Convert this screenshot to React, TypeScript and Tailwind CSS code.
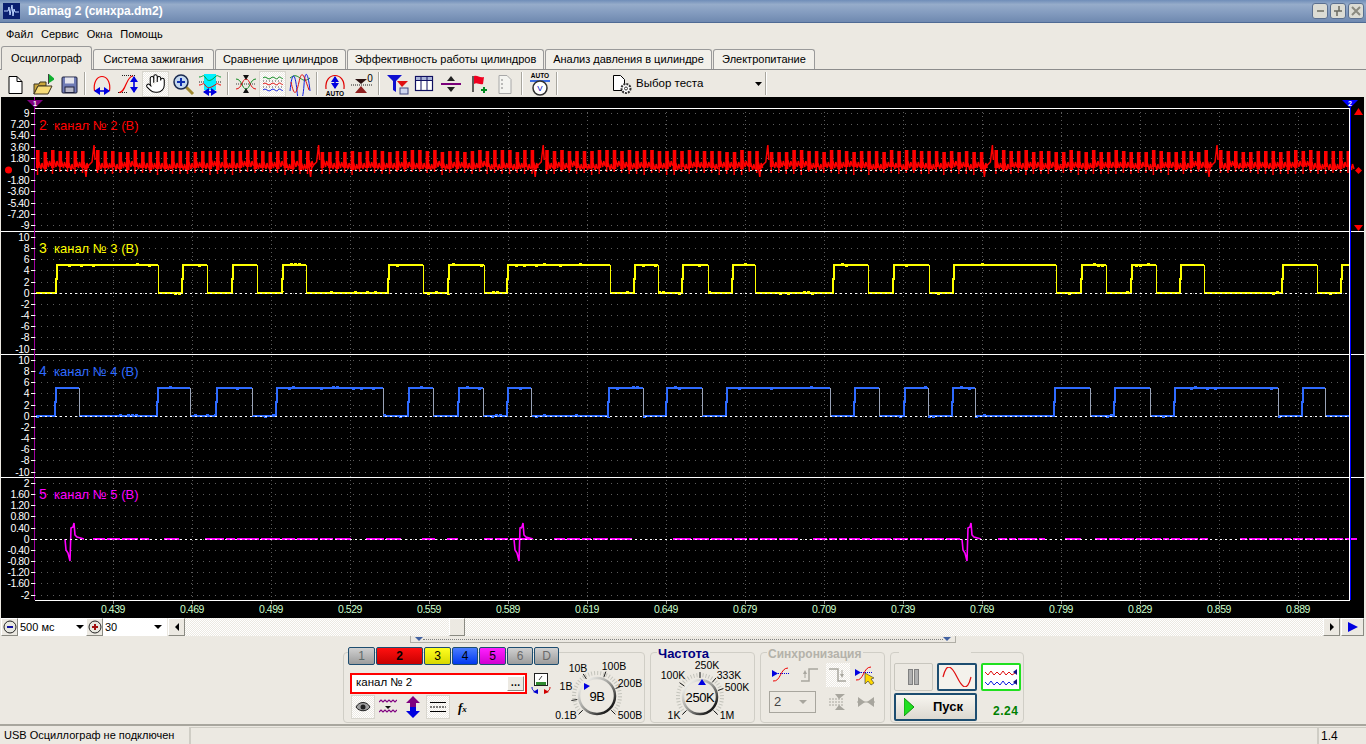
import type { ReactNode } from "react";
import { Hand } from "lucide-react";

const ditherBg =
  "bg-[repeating-conic-gradient(#ffffff_0_25%,#ece9e2_0_50%)] bg-[length:2px_2px]";

const noise = (i: number) => {
  const s = Math.sin(i * 12.9898) * 43758.5453;
  return s - Math.floor(s);
};

const PLOT_L = 35;
const PLOT_R = 1350;

function redPaths() {
  let bars = "";
  let links = "";
  let x = PLOT_L + 1;
  let i = 0;
  let nextEvent = 86;
  while (x < PLOT_R - 2) {
    if (x >= nextEvent - 3) {
      const e = nextEvent;
      links += `M${e - 2} 163 L${e} 177 L${e + 1} 168 L${e + 3} 165 L${e + 6} 162 L${e + 8} 145 L${e + 9} 160 `;
      x = e + 10;
      nextEvent += 224.6;
      continue;
    }
    const top = 150 + Math.round(noise(i) * 2);
    const bot = 167 + Math.round(noise(i + 0.5) * 3);
    const tail = 172 + Math.round(noise(i + 0.9) * 3);
    const mid = 160 + Math.round(noise(i + 0.3) * 3);
    bars += `M${x} ${top} h3.6 V${bot} h-3.6 Z `;
    links += `M${x + 1.5} ${bot} V${tail} M${x + 3} ${mid} L${x + 5} ${mid + 7} L${x + 6} ${mid + 1} L${x + 7.5} ${mid + 6} `;
    x += 7.5;
    i++;
  }
  return { bars, links };
}

function squarePaths(edges: number[][], hi: number, lo: number, seed: number) {
  const speck = (x: number, y: number, n: number) => {
    const v = noise(n + seed);
    if (v < 0.1) return `M${x} ${y - 1.5} h3 `;
    if (v > 0.9) return `M${x} ${y + 1.5} h3 `;
    return "";
  };
  let thick = `M${PLOT_L + 1} ${lo}`;
  let thin = "";
  let specks = "";
  let prev = PLOT_L + 1;
  let n = 0;
  for (const [rise, fall] of edges) {
    for (let x = prev; x < rise - 1; x += 4) specks += speck(x, lo, n++);
    const mid = Math.round((hi + lo) / 2);
    thick += ` L${rise - 1} ${lo} L${rise - 1} ${mid} L${rise} ${mid} L${rise} ${hi}`;
    for (let x = rise + 3; x < fall - 3; x += 4) specks += speck(x, hi, n++);
    thick += ` L${fall} ${hi}`;
    if (fall < PLOT_R) {
      thin += `M${fall} ${hi} L${fall} ${lo} `;
      thick += ` M${fall} ${lo}`;
    }
    prev = fall;
  }
  if (prev < PLOT_R) {
    thick += ` L${PLOT_R} ${lo}`;
    for (let x = prev; x < PLOT_R - 3; x += 4) specks += speck(x, lo, n++);
  }
  return { thick, thin, specks };
}

const yellowEdges = [
  [57, 158], [183, 207], [233, 257], [283, 306], [389, 423], [449, 484], [508, 610], [635, 658], [683, 708],
  [733, 755], [834, 868], [894, 929], [954, 1056], [1082, 1106], [1132, 1156], [1181, 1204], [1283, 1317], [1342, 1350],
];
const blueEdges = [
  [56, 79], [158, 190], [217, 252], [277, 383], [409, 433], [459, 483], [508, 531], [609, 643], [667, 702],
  [727, 830], [855, 879], [905, 928], [953, 975], [1055, 1090], [1115, 1150], [1175, 1278], [1303, 1325],
];

function magentaPaths() {
  const spikes = [70, 519, 967];
  let spike = "";
  for (const s of spikes) {
    spike += `M${s - 5} 539 L${s - 4} 550 L${s - 2} 553 L${s} 561 L${s + 1} 528 L${s + 3} 527 L${s + 4} 523 L${s + 5} 535 L${s + 7} 537 L${s + 14} 539 `;
  }
  let base = "";
  let x = PLOT_L + 1;
  let i = 0;
  while (x < PLOT_R) {
    const len = 6 + Math.round(noise(i) * 16);
    const near = spikes.some((s) => x > s - 8 && x < s + 22);
    if (!near && noise(i + 0.7) > 0.2) base += `M${x} 539 L${x + len} 539 `;
    x += len + 2;
    i++;
  }
  return { spike, base };
}

type PanelDef = { labels: string[]; top: number; step: number; zero: number };

const panels: PanelDef[] = [
  { labels: ["9", "7.20", "5.40", "3.60", "1.80", "0", "-1.80", "-3.60", "-5.40", "-7.20", "-9"], top: 113, step: 11.2, zero: 170 },
  { labels: ["10", "8", "6", "4", "2", "0", "-2", "-4", "-6", "-8", "-10"], top: 237, step: 11.15, zero: 293 },
  { labels: ["10", "8", "6", "4", "2", "0", "-2", "-4", "-6", "-8", "-10"], top: 360, step: 11.15, zero: 416 },
  { labels: ["2", "1.60", "1.20", "0.80", "0.40", "0", "-0.40", "-0.80", "-1.20", "-1.60", "-2"], top: 483, step: 11.15, zero: 539 },
];

const xLabels = ["0.439", "0.469", "0.499", "0.529", "0.559", "0.589", "0.619", "0.649", "0.679", "0.709", "0.739", "0.769", "0.799", "0.829", "0.859", "0.889"];

const titles = [
  { n: "2", text: "канал № 2 (В)", y: 130, color: "#ff0000" },
  { n: "3", text: "канал № 3 (В)", y: 253, color: "#ffff00" },
  { n: "4", text: "канал № 4 (В)", y: 376, color: "#2f6bff" },
  { n: "5", text: "канал № 5 (В)", y: 499, color: "#ff00ff" },
];

function Scope() {
  const yellow = squarePaths(yellowEdges, 265, 293, 3);
  const blue = squarePaths(blueEdges, 388, 416, 41);
  const red = redPaths();
  const magenta = magentaPaths();
  return (
    <svg className="block h-[521px] w-[1366px] shrink-0" viewBox="0 97 1366 521">
      <rect x="0" y="97" width="1366" height="521" fill="#ece9e2" />
      <rect x="1" y="97" width="1363" height="521" fill="#000000" />
      {panels.map((p) =>
        p.labels.map((_, i) => (
          <line key={`${p.top}-${i}`} x1={PLOT_L} x2={PLOT_R} y1={Math.round(p.top + i * p.step)} y2={Math.round(p.top + i * p.step)} stroke="#5c5c5c" strokeDasharray="1 5" shapeRendering="crispEdges" />
        ))
      )}
      {xLabels.map((l, i) => (
        <g key={l}>
          <line x1={113.5 + i * 79} x2={113.5 + i * 79} y1="108" y2="600" stroke="#5c5c5c" strokeDasharray="1 3" shapeRendering="crispEdges" />
          <line x1={113.5 + i * 79} x2={113.5 + i * 79} y1="600" y2="604" stroke="#8a8a8a" shapeRendering="crispEdges" />
          <text x={113 + i * 79} y="613" textAnchor="middle" fontSize="10.5" letterSpacing="-0.5" fill="#ccffcc">{l}</text>
        </g>
      ))}

      <path d={red.bars} fill="#ff0000" />
      <path d={red.links} stroke="#ff0000" strokeWidth="1.5" fill="none" />
      <path d={yellow.thick} stroke="#ffff00" strokeWidth="2" fill="none" shapeRendering="crispEdges" />
      <path d={yellow.thin} stroke="#ffff00" strokeWidth="1" fill="none" shapeRendering="crispEdges" />
      <path d={yellow.specks} stroke="#ffff00" strokeWidth="1" fill="none" shapeRendering="crispEdges" />
      <path d={blue.thick} stroke="#2f6bff" strokeWidth="2" fill="none" shapeRendering="crispEdges" />
      <path d={blue.thin} stroke="#9aa4b8" strokeWidth="1" fill="none" shapeRendering="crispEdges" />
      <path d={blue.specks} stroke="#2f6bff" strokeWidth="1" fill="none" shapeRendering="crispEdges" />
      <path d={magenta.base} stroke="#ff00ff" strokeWidth="2" fill="none" shapeRendering="crispEdges" />
      <path d={magenta.spike} stroke="#ff00ff" strokeWidth="1.6" fill="none" />

      {panels.map((p) => (
        <line key={p.zero} x1={PLOT_L} x2={PLOT_R} y1={p.zero + 0.5} y2={p.zero + 0.5} stroke="#ffffff" strokeDasharray="2 3" shapeRendering="crispEdges" />
      ))}

      <line x1={PLOT_L} x2={PLOT_R} y1="108.5" y2="108.5" stroke="#ffffff" shapeRendering="crispEdges" />
      <line x1="1" x2="1364" y1="231.5" y2="231.5" stroke="#ffffff" shapeRendering="crispEdges" />
      <line x1="1" x2="1364" y1="354.5" y2="354.5" stroke="#ffffff" shapeRendering="crispEdges" />
      <line x1="1" x2="1364" y1="477.5" y2="477.5" stroke="#ffffff" shapeRendering="crispEdges" />
      <line x1={PLOT_L} x2={PLOT_R} y1="600.5" y2="600.5" stroke="#ffffff" shapeRendering="crispEdges" />
      <line x1="34.5" x2="34.5" y1="97" y2="600" stroke="#a000a0" shapeRendering="crispEdges" />
      <line x1="1349.5" x2="1349.5" y1="108" y2="600" stroke="#ffffff" shapeRendering="crispEdges" />
      <line x1="1350.5" x2="1350.5" y1="100" y2="600" stroke="#0000ff" shapeRendering="crispEdges" />

      {panels.map((p) =>
        p.labels.map((l, i) => {
          const y = Math.round(p.top + i * p.step);
          return (
            <g key={`${p.top}-l-${i}`}>
              <text x="29" y={y + 4} textAnchor="end" fontSize="10.5" letterSpacing="-0.5" fill="#ffffff">{l}</text>
              <line x1="31" x2="35" y1={y + 0.5} y2={y + 0.5} stroke="#ffffff" shapeRendering="crispEdges" />
            </g>
          );
        })
      )}

      {titles.map((t) => (
        <g key={t.n} fill={t.color} fontSize="13">
          <text x="39" y={t.y} fontSize="14">{t.n}</text>
          <text x="54" y={t.y}>{t.text}</text>
        </g>
      ))}

      <polygon points="27,100 43,100 35,108" fill="#800080" />
      <text x="35" y="105.5" textAnchor="middle" fontSize="7" fontWeight="700" fill="#ffffff">1</text>
      <polygon points="1342,100 1358,100 1350,108" fill="#0000ff" />
      <text x="1350" y="106" textAnchor="middle" fontSize="7" fontWeight="700" fill="#ffffff">2</text>

      <circle cx="8.5" cy="170" r="3.5" fill="#ff0000" />
      <polygon points="1358.5,108 1354,115 1363,115" fill="#ff0000" />
      <polygon points="1358.5,167 1362,170.5 1358.5,174 1355,170.5" fill="#ff0000" />
      <polygon points="1354,225 1363,225 1358.5,231" fill="#ff0000" />
    </svg>
  );
}

const Svg = ({ children, w = 24, h = 24 }: { children: ReactNode; w?: number; h?: number }) => (
  <svg width={w} height={h} viewBox={`0 0 ${w} ${h}`} fill="none" className="block">
    {children}
  </svg>
);

const VArrow = ({ x, y1, y2 }: { x: number; y1: number; y2: number }) => (
  <g>
    <line x1={x} x2={x} y1={y1} y2={y2} stroke="#0000e0" strokeWidth="1.6" />
    <polygon points={`${x},${y1 - 1} ${x - 4},${y1 + 5} ${x + 4},${y1 + 5}`} fill="#0000e0" />
    <polygon points={`${x},${y2 + 1} ${x - 4},${y2 - 5} ${x + 4},${y2 - 5}`} fill="#0000e0" />
  </g>
);

const HArrow = ({ y, x1, x2 }: { y: number; x1: number; x2: number }) => (
  <g>
    <line x1={x1} x2={x2} y1={y} y2={y} stroke="#0000e0" strokeWidth="1.6" />
    <polygon points={`${x1 - 1},${y} ${x1 + 5},${y - 4} ${x1 + 5},${y + 4}`} fill="#0000e0" />
    <polygon points={`${x2 + 1},${y} ${x2 - 5},${y - 4} ${x2 - 5},${y + 4}`} fill="#0000e0" />
  </g>
);

const toolbarIcons: Record<string, ReactNode> = {
  file: (
    <Svg>
      <path d="M6 4.5h8l5 5v12H6z" fill="#ffffff" stroke="#000000" />
      <path d="M14 4.5v5h5" stroke="#000000" />
    </Svg>
  ),
  open: (
    <Svg>
      <path d="M18.5 2v10" stroke="#404040" />
      <polygon points="19,2 25,7 19,11" fill="#10b030" />
      <path d="M4 12h5l1 -2h6v4H8l-4 8z" fill="#c9a53a" stroke="#3d3520" />
      <path d="M4 22l4 -8h14l-4 8z" fill="#f7dc78" stroke="#3d3520" />
    </Svg>
  ),
  save: (
    <Svg>
      <rect x="5" y="5" width="15" height="16" rx="1" fill="#6f7bb5" stroke="#20233f" />
      <rect x="8" y="5.5" width="9" height="6" fill="#e4e4ec" />
      <rect x="8" y="15" width="9" height="5.5" fill="#b8b8c8" stroke="#20233f" />
    </Svg>
  ),
  arcWidth: (
    <Svg>
      <path d="M4.5 19C3 9 8 4.5 12 4.5S21 9 19.5 19" stroke="#f00000" strokeWidth="1.2" />
      <HArrow y={19} x1={5} x2={19} />
    </Svg>
  ),
  arcAmp: (
    <Svg>
      <path d="M5 3.5h14M1 20.5h10" stroke="#202020" strokeDasharray="1 1" />
      <path d="M2 20.5C9 21 9 4 16 4" stroke="#f00000" strokeWidth="1.2" />
      <VArrow x={17} y1={5} y2={20} />
    </Svg>
  ),
  hand: <Hand size={21} strokeWidth={1.2} color="#000000" fill="#ffffff" />,
  zoom: (
    <Svg>
      <line x1="15" y1="15" x2="22" y2="22" stroke="#a08a30" strokeWidth="3" />
      <circle cx="10" cy="10" r="7" fill="#c4d8ee" stroke="#1a2a50" strokeWidth="1.5" />
      <path d="M6 10h8M10 6v8" stroke="#1030b0" strokeWidth="2" />
    </Svg>
  ),
  cursor: (
    <Svg>
      <rect x="6" y="2" width="12" height="16" fill="#00f0ff" />
      <path d="M1 5c4 0 4 -3 6 0s4 6 10 0c3-3 3 0 6 0" stroke="#0a9a30" strokeWidth="1" />
      <path d="M1 10h5 M18 10h5" stroke="#202020" strokeDasharray="1 1" />
      <path d="M1 13c4 0 4 -3 6 0s4 4 10 0c3-3 3 0 6 0" stroke="#f00000" strokeWidth="1" />
      <HArrow y={20} x1={6} x2={18} />
    </Svg>
  ),
  cross: (
    <Svg>
      <path d="M2 7c6 0 6 10 10 10s4-10 10-10" stroke="#108a20" />
      <path d="M2 17c6 0 6 -10 10 -10s4 10 10 10" stroke="#e01010" />
      <path d="M2 12h20" stroke="#404040" strokeDasharray="1 1" />
      <polygon points="12,8 9,3 15,3" fill="#111111" />
      <polygon points="12,16 9,21 15,21" fill="#111111" />
    </Svg>
  ),
  waves: (
    <Svg>
      <path d="M2 6c3-3 5 3 8 0s5 3 7 0 4 2 5 0" stroke="#108a20" />
      <path d="M2 12c3-3 5 3 8 0s5 3 7 0 4 2 5 0" stroke="#e01010" />
      <path d="M2 18c3-3 5 3 8 0s5 3 7 0 4 2 5 0" stroke="#1020e0" />
      <path d="M2 9h20M2 15h20" stroke="#505050" strokeDasharray="1 2" />
    </Svg>
  ),
  overlap: (
    <Svg>
      <path d="M2 6c4-3 6-3 10 0s6 3 10 0" stroke="#108a20" />
      <path d="M2 19c2-20 5-20 7 0s6 10 7-6 4-14 6 6" stroke="#1020e0" />
      <path d="M3 10c3 14 5 14 8 0s5-6 10 8" stroke="#e01010" />
    </Svg>
  ),
  auto: (
    <Svg>
      <path d="M3 17C2 8 7 3.5 12 3.5S22 8 21 17" stroke="#e00000" strokeWidth="1.2" />
      <VArrow x={12} y1={5} y2={16} />
      <text x="12" y="23.5" textAnchor="middle" fontSize="6.5" fontWeight="700" fill="#000000">AUTO</text>
    </Svg>
  ),
  zero: (
    <Svg>
      <polygon points="11,12 5,7 17,7" fill="#2a1010" />
      <path d="M1 13h22" stroke="#202020" strokeDasharray="1 1" />
      <polygon points="11,14 5,21 17,21" fill="#902020" />
      <text x="20" y="10" textAnchor="middle" fontSize="10" fill="#000000">0</text>
    </Svg>
  ),
  filter: (
    <Svg>
      <polygon points="2,3 17,3 11,9 11,20 8,18 8,9" fill="#1010d0" />
      <polygon points="12,9 23,9 17,15" fill="#e01010" />
      <rect x="15" y="16" width="8" height="6" fill="#d0d8f0" stroke="#404880" />
    </Svg>
  ),
  table: (
    <Svg>
      <rect x="3.5" y="4.5" width="17" height="14" fill="#ffffff" stroke="#101060" strokeWidth="1.2" />
      <rect x="3.5" y="4.5" width="17" height="4" fill="#aab4d8" stroke="#101060" />
      <path d="M9 5v14M15 5v14" stroke="#101060" />
    </Svg>
  ),
  split: (
    <Svg>
      <rect x="2" y="11" width="20" height="2" fill="#7a007a" />
      <polygon points="12,4 8,9 16,9" fill="#222222" />
      <polygon points="12,20 8,15 16,15" fill="#222222" />
    </Svg>
  ),
  flag: (
    <Svg>
      <path d="M7 4v16" stroke="#222222" strokeWidth="1.4" />
      <path d="M8 4c4-1 5 2 10 1l-1 7c-4 1-6-2-9 0z" fill="#f00020" />
      <path d="M15 18h6M18 15v6" stroke="#008a20" strokeWidth="2" />
    </Svg>
  ),
  report: (
    <Svg>
      <path d="M6 3.5h8l4 4v14H6z" fill="#f4f4f0" stroke="#a8a8a8" />
      <path d="M8 8h2M8 12h2M8 16h2" stroke="#808080" />
    </Svg>
  ),
  autoV: (
    <Svg>
      <text x="12" y="6" textAnchor="middle" fontSize="6.5" fontWeight="700" fill="#000000">AUTO</text>
      <path d="M2 9h20" stroke="#0040e0" strokeWidth="1.5" />
      <circle cx="12" cy="16" r="7" fill="#ffffff" stroke="#303030" strokeWidth="1.5" />
      <text x="12" y="19" textAnchor="middle" fontSize="8" fill="#0000c0">V</text>
    </Svg>
  ),
};

const Sep = ({ w }: { w: string }) => (
  <div className={`flex h-full items-center justify-center ${w}`}>
    <div className="h-[23px] w-[2px] border-r border-r-white bg-[#a8a69e]" />
  </div>
);

const ToolBtn = ({ name, pressed }: { name: string; pressed?: boolean }) => (
  <div className={`flex h-[26px] w-[27px] items-center justify-center ${pressed ? `${ditherBg} border border-[#d8d6ce]` : ""}`}>
    {toolbarIcons[name]}
  </div>
);

function Toolbar() {
  return (
    <div className="flex h-[27px] shrink-0 items-center pl-px">
      <ToolBtn name="file" />
      <ToolBtn name="open" />
      <ToolBtn name="save" />
      <Sep w="w-[6px]" />
      <ToolBtn name="arcWidth" />
      <ToolBtn name="arcAmp" />
      <ToolBtn name="hand" pressed />
      <ToolBtn name="zoom" />
      <ToolBtn name="cursor" />
      <Sep w="w-[9px]" />
      <ToolBtn name="cross" />
      <ToolBtn name="waves" pressed />
      <ToolBtn name="overlap" />
      <Sep w="w-[8px]" />
      <ToolBtn name="auto" />
      <ToolBtn name="zero" />
      <Sep w="w-[8px]" />
      <ToolBtn name="filter" />
      <ToolBtn name="table" />
      <ToolBtn name="split" />
      <ToolBtn name="flag" />
      <ToolBtn name="report" />
      <Sep w="w-[8px]" />
      <ToolBtn name="autoV" />
      <Sep w="w-[8px]" />
      <div className="flex h-full w-[203px] items-center pl-[50px]">
        <Svg w={22} h={22}>
          <path d="M2.5 2.5h7l4 4v11h-11z" fill="#ffffff" stroke="#000000" />
          <circle cx="15" cy="15.5" r="4.5" fill="#ffffff" stroke="#333333" strokeWidth="2" strokeDasharray="2 1" />
          <circle cx="15" cy="15.5" r="1.5" stroke="#333333" />
        </Svg>
        <span className="ml-[3px] whitespace-nowrap text-[11.5px] text-black">Выбор теста</span>
        <svg width="7" height="4" className="ml-[52px] shrink-0"><polygon points="0,0 7,0 3.5,4" fill="#000000" /></svg>
      </div>
      <Sep w="w-[3px]" />
    </div>
  );
}

const tabs = [
  { label: "Осциллограф", w: "w-[91px]", active: true },
  { label: "Система зажигания", w: "w-[121px]" },
  { label: "Сравнение цилиндров", w: "w-[131px]" },
  { label: "Эффективность работы цилиндров", w: "w-[197px]" },
  { label: "Анализ давления в цилиндре", w: "w-[167px]" },
  { label: "Электропитание", w: "w-[102px]" },
];

function Tabs() {
  return (
    <div className="flex h-[24px] shrink-0 items-end gap-px border-b border-[#8c8c8c] pl-px">
      {tabs.map((t) =>
        t.active ? (
          <div key={t.label} className={`-mb-px flex h-[24px] items-center justify-center whitespace-nowrap rounded-t-[3px] border border-b-0 border-[#9a9a9a] bg-[#ece9e2] text-[11px] text-black ${t.w}`}>
            {t.label}
          </div>
        ) : (
          <div key={t.label} className={`flex h-[20px] items-center justify-center whitespace-nowrap rounded-t-[3px] border border-b-0 border-[#9a9a9a] bg-[#f2f0ea] text-[11px] text-black ${t.w}`}>
            {t.label}
          </div>
        )
      )}
    </div>
  );
}

const WinBtn = ({ children }: { children: ReactNode }) => (
  <div className="flex h-[16px] w-[16px] items-center justify-center rounded-[3px] border border-[#5a6f90] bg-[#dcdcd4]">
    {children}
  </div>
);

function TitleBar() {
  return (
    <div className="flex h-[23px] shrink-0 items-center border-b border-[#4f6a94] bg-[linear-gradient(180deg,#6f8db8_0%,#96acca_20%,#859dc0_55%,#6f89b0_100%)] pl-[3px] pr-[2px]">
      <svg width="17" height="16" viewBox="0 0 17 16">
        <rect width="17" height="16" fill="#0a1f70" />
        <path d="M1 8h4l1-4 1 8 2-10 1 11 1-7 1 3h4" stroke="#bcd4ff" fill="none" />
      </svg>
      <span className="ml-[8px] whitespace-nowrap text-[12px] font-bold text-white">Diamag 2 (синхра.dm2)</span>
      <div className="ml-auto flex gap-[2px]">
        <WinBtn>
          <div className="h-[2px] w-[7px] bg-[#8a8a80]" />
        </WinBtn>
        <WinBtn>
          <svg width="10" height="10"><path d="M6 0v5H1M4 10V5h5" stroke="#6a6a60" fill="none" strokeWidth="1.5" /></svg>
        </WinBtn>
        <WinBtn>
          <svg width="10" height="10"><path d="M1 1l8 8M9 1l-8 8" stroke="#8a8a80" strokeWidth="2" /></svg>
        </WinBtn>
      </div>
    </div>
  );
}

function MenuBar() {
  return (
    <div className="flex h-[23px] shrink-0 items-center gap-[8px] pl-[6px] text-[11px] text-black">
      <span>Файл</span>
      <span>Сервис</span>
      <span>Окна</span>
      <span>Помощь</span>
    </div>
  );
}

const raised = "border border-t-white border-l-white border-r-[#8a8a82] border-b-[#8a8a82] bg-[#ece9e2]";

const Tri = ({ dir, color = "#000000" }: { dir: "l" | "r" | "d"; color?: string }) => (
  <svg width="8" height="8" viewBox="0 0 8 8">
    <polygon points={dir === "l" ? "6,0 6,8 2,4" : dir === "r" ? "2,0 2,8 6,4" : "0,2 8,2 4,6"} fill={color} />
  </svg>
);

const RoundBtn = ({ children }: { children: ReactNode }) => (
  <div className={`flex h-[18px] w-[17px] shrink-0 items-center justify-center ${raised}`}>
    {children}
  </div>
);

function ScrollRow() {
  return (
    <div className="flex h-[18px] shrink-0 items-stretch pl-[1px] pr-[2px] text-[11px] text-black">
      <RoundBtn>
        <svg width="14" height="14"><circle cx="7" cy="7" r="6" fill="#e8e8e0" stroke="#222222" /><path d="M4 7h6" stroke="#1010a0" strokeWidth="2" /></svg>
      </RoundBtn>
      <div className="flex w-[68px] items-center bg-white pl-[2px]">
        <span>500 мс</span>
        <span className="ml-auto mr-[2px]"><Tri dir="d" /></span>
      </div>
      <RoundBtn>
        <svg width="14" height="14"><circle cx="7" cy="7" r="6" fill="#e8e8e0" stroke="#222222" /><path d="M4 7h6M7 4v6" stroke="#a01010" strokeWidth="2" /></svg>
      </RoundBtn>
      <div className="flex w-[64px] items-center bg-white pl-[2px]">
        <span>30</span>
        <span className="ml-auto mr-[5px]"><Tri dir="d" /></span>
      </div>
      <div className="w-[1px]" />
      <RoundBtn><Tri dir="l" /></RoundBtn>
      <div className={`flex flex-1 items-stretch pl-[264px] ${ditherBg}`}>
        <div className={`h-[18px] w-[16px] ${raised}`} />
      </div>
      <RoundBtn><Tri dir="r" /></RoundBtn>
      <div className={`ml-px flex h-[18px] w-[23px] items-center justify-center ${raised}`}>
        <svg width="12" height="10"><polygon points="1,0 1,10 11,5" fill="#0000e0" /></svg>
      </div>
    </div>
  );
}

const chanButtons = [
  { label: "1", w: "w-[27px]", cls: "bg-[linear-gradient(#d0d0d0,#9c9c9c)] text-[#5e6a6a]" },
  { label: "2", w: "w-[47px]", cls: "bg-[linear-gradient(#ff1010,#c80000)] text-black font-bold" },
  { label: "3", w: "w-[27px]", cls: "bg-[linear-gradient(#ffff20,#d8d800)] text-black" },
  { label: "4", w: "w-[26px]", cls: "bg-[linear-gradient(#4a7cff,#0038f0)] text-black" },
  { label: "5", w: "w-[27px]", cls: "bg-[linear-gradient(#ff20ff,#d000d0)] text-black" },
  { label: "6", w: "w-[26px]", cls: "bg-[linear-gradient(#d0d0d0,#9c9c9c)] text-[#6a6a6a]" },
  { label: "D", w: "w-[25px]", cls: "bg-[linear-gradient(#d0d0d0,#9c9c9c)] text-[#6a6a6a]" },
];

type DialProps = {
  x: number; y: number; w: number; h: number; cx: number; cy: number; r: number; id: string; center: string;
  ticks: { a: number; label: string; lx: number; ly: number }[];
  pointer: string;
};

const pol = (cx: number, cy: number, r: number, deg: number) => {
  const t = ((deg - 90) * Math.PI) / 180;
  return [cx + r * Math.cos(t), cy + r * Math.sin(t)];
};

function Dial({ x, y, w, h, cx, cy, r, id, center, ticks, pointer }: DialProps) {
  const [ax, ay] = pol(cx, cy, r + 5, -135);
  const [bx, by] = pol(cx, cy, r + 5, 135);
  return (
    <svg width={w} height={h} viewBox={`${x} ${y} ${w} ${h}`} className="block shrink-0">
      <defs>
        <linearGradient id={id} x1="0" y1="0" x2="1" y2="1">
          <stop offset="0.1" stopColor="#f4f4f0" />
          <stop offset="0.5" stopColor="#9a9a96" />
          <stop offset="0.85" stopColor="#1c1c1c" />
        </linearGradient>
      </defs>
      <path d={`M${ax} ${ay}A${r + 5} ${r + 5} 0 1 1 ${bx} ${by}`} stroke="#c4c4bc" strokeWidth="4" strokeDasharray="1 2" fill="none" />
      <circle cx={cx} cy={cy} r={r} stroke={`url(#${id})`} strokeWidth="2.5" fill="none" />
      {ticks.map((t) => {
        const [x1, y1] = pol(cx, cy, r + 2, t.a);
        const [x2, y2] = pol(cx, cy, r + 8, t.a);
        return (
          <g key={t.label}>
            <line x1={x1} y1={y1} x2={x2} y2={y2} stroke="#202020" />
            <text x={t.lx} y={t.ly} textAnchor="middle" fontSize="10.5" fill="#000000">{t.label}</text>
          </g>
        );
      })}
      <polygon points={pointer} fill="#0000e0" />
      <text x={cx} y={cy + 5} textAnchor="middle" fontSize="13" letterSpacing="-0.4" fill="#000000">{center}</text>
    </svg>
  );
}

const SmallIcon = ({ children, cls = "" }: { children: ReactNode; cls?: string }) => (
  <div className={`flex items-center justify-center ${cls}`}>{children}</div>
);

function ChannelPanel() {
  return (
    <div className="flex h-[71px] w-[302px] rounded-[4px] border border-[#d0cec6]">
      <div className="mt-[-6px] w-[210px] shrink-0 pl-[4px]">
        <div className="flex gap-px">
          {chanButtons.map((b) => (
            <div key={b.label} className={`flex h-[18px] shrink-0 items-center justify-center rounded-[2px] border border-[#1d4d70] text-[12px] ${b.w} ${b.cls}`}>
              {b.label}
            </div>
          ))}
        </div>
        <div className="mt-[7px] flex items-center">
          <div className="ml-[2px] flex h-[21px] w-[177px] shrink-0 items-center border-2 border-[#ff0000] bg-white pl-[4px] pr-[1px] text-[11.5px]">
            <span>канал № 2</span>
            <div className={`ml-auto flex h-[15px] w-[17px] items-center justify-center text-[10px] font-bold leading-none ${raised}`}>…</div>
          </div>
          <div className="ml-[4px] shrink-0">
            <Svg w={20} h={22}>
              <rect x="3.5" y="1.5" width="13" height="12" fill="#ffffff" stroke="#202020" />
              <rect x="5" y="10" width="10" height="3" fill="#308a30" />
              <path d="M8 8l3-4" stroke="#404040" />
              <path d="M1 15c0 4 3 5 6 5" stroke="#0000d0" /><polygon points="2,20 7,17 7,22" fill="#0000d0" />
              <path d="M19 15c0 4-3 5-6 5" stroke="#d00000" /><polygon points="18,20 13,17 13,22" fill="#d00000" />
            </Svg>
          </div>
        </div>
        <div className="mt-[1px] flex items-center">
          <SmallIcon cls={`ml-[3px] h-[24px] w-[24px] border border-[#d8d6ce] ${ditherBg}`}>
            <Svg w={16} h={12}>
              <path d="M1 6c3-6 11-6 14 0-3 5-11 5-14 0z" fill="#a0a0a0" stroke="#202020" />
              <circle cx="8" cy="6" r="2.5" fill="#202020" />
            </Svg>
          </SmallIcon>
          <SmallIcon cls="ml-[4px] h-[24px] w-[18px]">
            <Svg w={18} h={18}>
              <path d="M0 4l2-2 2 2 2-2 2 2 2-2 2 2 2-2 2 2 2-2" stroke="#800080" strokeWidth="1.2" />
              <polygon points="6,8 12,8 9,11" fill="#101010" />
              <path d="M0 14l2-2 2 2 2-2 2 2 2-2 2 2 2-2 2 2 2-2" stroke="#800080" strokeWidth="1.2" />
            </Svg>
          </SmallIcon>
          <SmallIcon cls="ml-[8px] h-[24px] w-[16px]">
            <Svg w={16} h={22}>
              <polygon points="8,0 1,7 5,7 5,12 11,12 11,7 15,7" fill="#800080" />
              <polygon points="8,22 1,15 5,15 5,11 11,11 11,15 15,15" fill="#0000e0" />
            </Svg>
          </SmallIcon>
          <SmallIcon cls={`ml-[5px] h-[24px] w-[24px] border border-[#d8d6ce] ${ditherBg}`}>
            <Svg w={18} h={14}>
              <path d="M1 2.5h16M1 11.5h16" stroke="#000000" />
              <path d="M1 7h16" stroke="#000000" strokeDasharray="2 1" />
            </Svg>
          </SmallIcon>
          <span className="ml-[8px] font-['Liberation_Serif',serif] text-[13px] font-bold italic leading-none text-black">
            f<span className="text-[9px]">x</span>
          </span>
        </div>
      </div>
      <Dial
        x={554}
        y={653}
        w={90}
        h={69}
        cx={597}
        cy={696}
        r={18}
        id="dial-volt"
        center="9В"
        pointer="584,683 590,686 584,690"
        ticks={[
          { a: -135, label: "0.1В", lx: 566, ly: 719 },
          { a: -100, label: "1В", lx: 566, ly: 690 },
          { a: -32, label: "10В", lx: 578, ly: 672 },
          { a: 20, label: "100В", lx: 614, ly: 670 },
          { a: 68, label: "200В", lx: 630, ly: 687 },
          { a: 135, label: "500В", lx: 630, ly: 719 },
        ]}
      />
    </div>
  );
}

function FreqPanel() {
  return (
    <div className="relative h-[71px] w-[105px] rounded-[4px] border border-[#d0cec6]">
      <span className="absolute left-[6px] top-[-6px] bg-[#ece9e2] px-px text-[13px] font-bold leading-[14px] text-[#000080]">Частота</span>
      <Dial
        x={651}
        y={653}
        w={103}
        h={69}
        cx={700}
        cy={697}
        r={17}
        id="dial-freq"
        center="250K"
        pointer="702,679 698,685 706,685"
        ticks={[
          { a: -135, label: "1K", lx: 674, ly: 719 },
          { a: -55, label: "100K", lx: 673, ly: 679 },
          { a: 0, label: "250K", lx: 707, ly: 669 },
          { a: 40, label: "333K", lx: 729, ly: 679 },
          { a: 70, label: "500K", lx: 737, ly: 691 },
          { a: 135, label: "1M", lx: 727, ly: 719 },
        ]}
      />
    </div>
  );
}

function SyncPanel() {
  return (
    <div className="relative flex h-[71px] w-[125px] flex-col rounded-[4px] border border-[#d0cec6] pl-[8px] pt-[10px]">
      <span className="absolute left-[6px] top-[-6px] whitespace-nowrap bg-[#ece9e2] px-px text-[12px] font-bold leading-[14px] text-[#b4b2aa]">Синхронизация</span>
      <div className="flex h-[24px] items-center">
        <SmallIcon cls="h-[24px] w-[24px]">
          <Svg w={20} h={20}>
            <polygon points="1,5 1,12 7,8.5" fill="#0000e0" />
            <path d="M1 8.5h17" stroke="#0000e0" strokeDasharray="1 1" />
            <path d="M2 16c8 1 7-13 15-13" stroke="#f00000" />
          </Svg>
        </SmallIcon>
        <SmallIcon cls="ml-[5px] h-[24px] w-[24px]">
          <Svg w={20} h={18}>
            <path d="M1 15h8V3h9" stroke="#a8a69e" strokeWidth="1.5" />
            <path d="M5 12V6" stroke="#a8a69e" /><polygon points="5,4 3,8 7,8" fill="#a8a69e" />
          </Svg>
        </SmallIcon>
        <SmallIcon cls={`ml-[4px] h-[24px] w-[24px] ${ditherBg}`}>
          <Svg w={20} h={18}>
            <path d="M1 3h9v12h8" stroke="#a8a69e" strokeWidth="1.5" />
            <path d="M14 4v6" stroke="#a8a69e" /><polygon points="14,12 12,8 16,8" fill="#a8a69e" />
          </Svg>
        </SmallIcon>
        <SmallIcon cls="ml-[3px] h-[24px] w-[24px]">
          <Svg w={22} h={22}>
            <polygon points="1,5 1,12 7,8.5" fill="#0000e0" />
            <path d="M1 8.5h17" stroke="#0000e0" strokeDasharray="1 1" />
            <path d="M2 16c8 1 7-13 15-13" stroke="#f00000" />
            <polygon points="11,9 11,20 14,17 17,21 20,19 17,15 20,14" fill="#ffd800" stroke="#303030" strokeWidth="0.6" />
          </Svg>
        </SmallIcon>
      </div>
      <div className="mt-[4px] flex items-center">
        <div className="flex h-[22px] w-[47px] items-center border border-[#a8a69e] pl-[4px] text-[13px] text-[#444444]">
          <span>2</span>
          <span className="ml-auto mr-[8px]"><Tri dir="d" color="#a8a69e" /></span>
        </div>
        <SmallIcon cls="ml-[10px] h-[22px] w-[24px]">
          <Svg w={20} h={18}>
            <path d="M1 6h14M1 9h14M1 12h14" stroke="#a8a69e" strokeDasharray="2 1" />
            <polygon points="11,6 7,1 17,1" fill="#a8a69e" />
            <polygon points="11,12 7,17 17,17" fill="#a8a69e" />
          </Svg>
        </SmallIcon>
        <SmallIcon cls="ml-[4px] h-[22px] w-[24px]">
          <Svg w={20} h={12}>
            <path d="M1 6h18" stroke="#a8a69e" />
            <polygon points="2,1 2,11 9,6" fill="#a8a69e" />
            <polygon points="18,1 18,11 11,6" fill="#a8a69e" />
          </Svg>
        </SmallIcon>
      </div>
    </div>
  );
}

function RunPanel() {
  return (
    <div className="relative h-[71px] w-[134px] rounded-[4px] border border-[#d0cec6] pl-[3px] pt-[10px]">
      <div className="absolute left-[8px] top-[-1px] h-px w-[72px] bg-[#ece9e2]" />
      <div className="flex gap-[4px]">
        <div className="flex h-[28px] w-[39px] items-center justify-center gap-px rounded-[2px] border border-[#c8c6be]">
          <div className="h-[16px] w-[5px] border border-[#808080] bg-[#b0b0b0]" />
          <div className="h-[16px] w-[5px] border border-[#808080] bg-[#b0b0b0]" />
        </div>
        <div className="flex h-[28px] w-[40px] items-center justify-center rounded-[2px] border-2 border-[#1d4d70] bg-[#f4f2ec]">
          <Svg w={30} h={20}>
            <path d="M1 10C5-6 10 0 15 10s10 16 14 0" stroke="#e01010" strokeWidth="1.2" />
          </Svg>
        </div>
        <div className="flex h-[28px] w-[40px] items-center justify-center rounded-[2px] border-2 border-[#20e020] bg-white">
          <Svg w={34} h={22}>
            <path d="M1 6l3 3 3-4 3 4 3-3 3 3 3-4 3 4 3-3 3 3 3-2" stroke="#e01010" />
            <polygon points="33,3 33,9 29,6" fill="#101080" />
            <path d="M1 16l3 3 3-4 3 4 3-3 3 3 3-4 3 4 3-3 3 3 3-2" stroke="#1020e0" />
            <polygon points="33,13 33,19 29,16" fill="#101080" />
          </Svg>
        </div>
      </div>
      <div className="mt-[2px] flex items-center">
        <div className="flex h-[28px] w-[83px] items-center rounded-[2px] border-2 border-[#1d4d70] bg-[linear-gradient(#f8f6f0,#dcd8d0)] pl-[8px]">
          <svg width="10" height="18"><polygon points="0,0 0,18 10,9" fill="#20e020" stroke="#109010" /></svg>
          <span className="ml-[19px] text-[13px] font-bold text-black">Пуск</span>
        </div>
        <span className="ml-[16px] mt-[7px] text-[12px] font-bold tracking-[0.5px] text-[#008000]">2.24</span>
      </div>
    </div>
  );
}

function BottomArea() {
  return (
    <div className="flex h-[88px] shrink-0 flex-col">
      <div className="ml-[410px] flex h-[7px] w-[546px] items-center justify-between border border-t-0 border-[#b0aea6] px-[4px]">
        <Tri dir="d" color="#4060a0" />
        <div className="h-0 flex-1 border-t border-dotted border-[#808080]" />
        <Tri dir="d" color="#4060a0" />
      </div>
      <div className="ml-[343px] mt-[9px] flex gap-[5px]">
        <ChannelPanel />
        <FreqPanel />
        <SyncPanel />
        <RunPanel />
      </div>
    </div>
  );
}

function StatusBar() {
  return (
    <div className="flex h-[20px] shrink-0 items-stretch border-t-2 border-[#a8a69e] pt-px text-[11px] text-black">
      <div className="flex w-[191px] items-center whitespace-nowrap border-r-2 border-[#cfcdc5] pl-[4px]">USB Осциллограф не подключен</div>
      <div className="w-[1126px] border-t border-[#cfcdc5]" />
      <div className="flex flex-1 items-center border-l-2 border-t border-[#cfcdc5] pl-[2px] text-[12px]">1.4</div>
    </div>
  );
}

export default function App() {
  return (
    <div className="flex h-[744px] w-[1366px] flex-col overflow-hidden bg-[#ece9e2] font-['Liberation_Sans',sans-serif]">
      <TitleBar />
      <MenuBar />
      <Tabs />
      <Toolbar />
      <Scope />
      <ScrollRow />
      <BottomArea />
      <StatusBar />
    </div>
  );
}
